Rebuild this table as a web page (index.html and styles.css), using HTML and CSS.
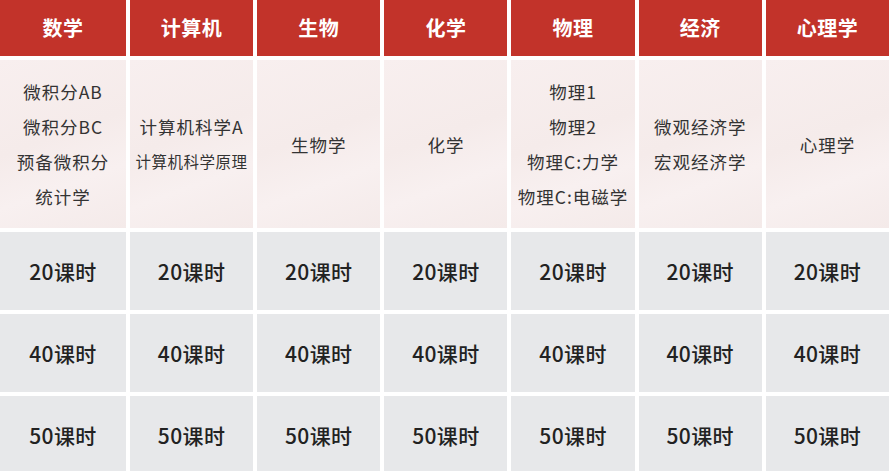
FILE: index.html
```html
<!DOCTYPE html>
<html lang="zh-CN">
<head>
<meta charset="utf-8">
<title>课程课时表</title>
<link rel="stylesheet" href="styles.css">
</head>
<body>
<div class="table">
  <div class="cell head">数学</div>
  <div class="cell head">计算机</div>
  <div class="cell head">生物</div>
  <div class="cell head">化学</div>
  <div class="cell head">物理</div>
  <div class="cell head">经济</div>
  <div class="cell head">心理学</div>

  <div class="cell course"><p>微积分AB</p><p>微积分BC</p><p>预备微积分</p><p>统计学</p></div>
  <div class="cell course"><p>计算机科学A</p><p class="small">计算机科学原理</p></div>
  <div class="cell course"><p>生物学</p></div>
  <div class="cell course"><p>化学</p></div>
  <div class="cell course"><p>物理1</p><p>物理2</p><p>物理C:力学</p><p>物理C:电磁学</p></div>
  <div class="cell course"><p>微观经济学</p><p>宏观经济学</p></div>
  <div class="cell course"><p>心理学</p></div>

  <div class="cell hours">20课时</div>
  <div class="cell hours">20课时</div>
  <div class="cell hours">20课时</div>
  <div class="cell hours">20课时</div>
  <div class="cell hours">20课时</div>
  <div class="cell hours">20课时</div>
  <div class="cell hours">20课时</div>

  <div class="cell hours">40课时</div>
  <div class="cell hours">40课时</div>
  <div class="cell hours">40课时</div>
  <div class="cell hours">40课时</div>
  <div class="cell hours">40课时</div>
  <div class="cell hours">40课时</div>
  <div class="cell hours">40课时</div>

  <div class="cell hours">50课时</div>
  <div class="cell hours">50课时</div>
  <div class="cell hours">50课时</div>
  <div class="cell hours">50课时</div>
  <div class="cell hours">50课时</div>
  <div class="cell hours">50课时</div>
  <div class="cell hours">50课时</div>
</div>
</body>
</html>
```

FILE: styles.css
```css
html, body {
  margin: 0;
  padding: 0;
  background: #ffffff;
  overflow: hidden;
}

body {
  font-family: "Noto Sans CJK SC", "Noto Sans", sans-serif;
  width: 889px;
  height: 471px;
}

.table {
  display: grid;
  grid-template-columns: 126px repeat(6, 1fr);
  grid-template-rows: 56px 168px 78px 78px 78px;
  column-gap: 4px;
  row-gap: 4px;
  width: 889px;
}

.cell {
  display: flex;
  flex-direction: column;
  align-items: center;
  justify-content: center;
  text-align: center;
}

.head {
  background: #c2332a;
  color: #ffffff;
  font-size: 20px;
  font-weight: 700;
  letter-spacing: 0.5px;
  padding-bottom: 2px;
}

.course {
  background: linear-gradient(160deg, #f8efef 0%, #f5ebea 45%, #f8f0f0 70%, #f4eae9 100%);
  color: #333333;
  font-size: 17.5px;
  letter-spacing: 1px;
}

.course p {
  margin: 0;
  line-height: 35px;
  white-space: nowrap;
}

.course p.small {
  font-size: 15.5px;
  letter-spacing: 0.5px;
}

.hours {
  background: #e7e8ea;
  color: #222222;
  font-size: 21px;
  font-weight: 500;
  letter-spacing: 0.4px;
}
```
